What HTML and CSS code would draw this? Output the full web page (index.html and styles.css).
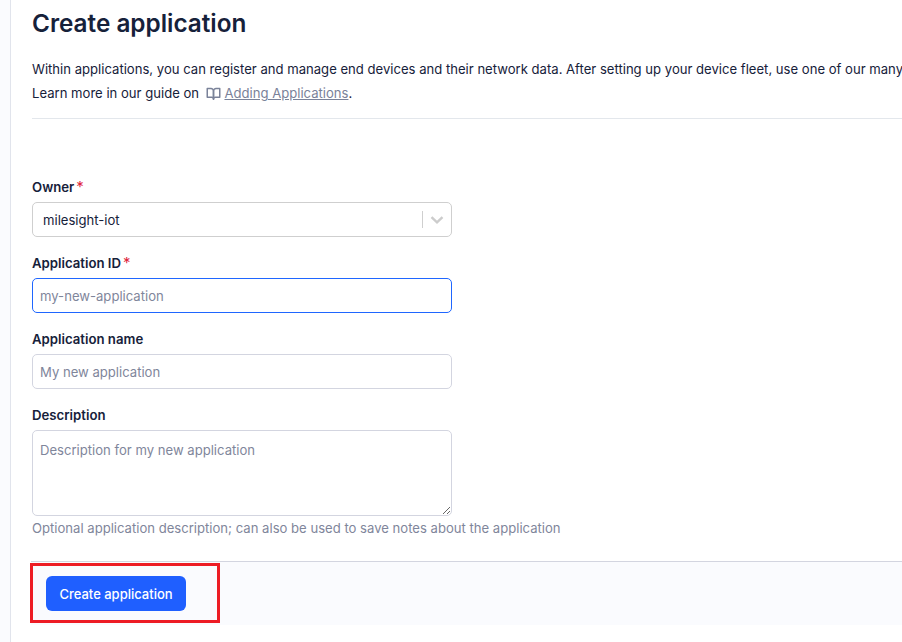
FILE: index.html
```html
<!DOCTYPE html>
<html lang="en">
<head>
    <meta charset="UTF-8">
    <meta name="viewport" content="width=device-width, initial-scale=1.0">
    <title>Create application</title>
    <link rel="stylesheet" href="styles.css">
</head>
<body>
    <div class="sidebar"></div>

    <main class="content">
        <h1 class="title">Create application</h1>
        <p class="intro">Within applications, you can register and manage end devices and their network data. After setting up your device fleet, use one of our many</p>
        <p class="intro">Learn more in our guide on
            <a class="guide-link" href="#"><svg class="book-icon" viewBox="0 0 24 24" width="15" height="15" fill="none" stroke="currentColor" stroke-width="2.4" stroke-linecap="round" stroke-linejoin="round"><path d="M2 4h6a4 4 0 0 1 4 4v13a3 3 0 0 0-3-3H2z"/><path d="M22 4h-6a4 4 0 0 0-4 4v13a3 3 0 0 1 3-3h7z"/></svg> <span class="guide-text">Adding Applications</span></a>.</p>
        <hr class="divider">

        <form class="app-form">
            <div class="form-group">
                <label class="field-label">Owner<span class="required">*</span></label>
                <div class="select-box">
                    <span class="select-value">milesight-iot</span>
                    <span class="select-sep"></span>
                    <svg class="select-arrow" viewBox="0 0 20 20" width="20" height="20"><path d="M4.5 7.2 10 12.4l5.5-5.2" fill="none" stroke="#ccc" stroke-width="2.4"/></svg>
                </div>
            </div>
            <div class="form-group">
                <label class="field-label" for="appId">Application ID<span class="required">*</span></label>
                <input class="text-input is-focused" type="text" id="appId" placeholder="my-new-application">
            </div>
            <div class="form-group">
                <label class="field-label" for="appName">Application name</label>
                <input class="text-input" type="text" id="appName" placeholder="My new application">
            </div>
            <div class="form-group">
                <label class="field-label" for="appDesc">Description</label>
                <textarea class="text-area" id="appDesc" placeholder="Description for my new application"></textarea>
                <div class="hint">Optional application description; can also be used to save notes about the application</div>
            </div>

            <div class="submit-bar">
                <button class="submit-btn" type="button">Create application</button>
                <div class="highlight-box"></div>
            </div>
        </form>
    </main>
</body>
</html>
```

FILE: styles.css
```css
* {
    box-sizing: border-box;
}
html, body {
    height: 642px;
    overflow: hidden;
}
body {
    margin: 0;
    display: flex;
    font-family: Inter, "Noto Sans", sans-serif;
    color: #16213a;
    background: #fff;
}
.sidebar {
    width: 11px;
    flex: none;
    background: #fafbfe;
    border-right: 1px solid #e1e4ec;
}
.content {
    flex: 1;
    min-width: 0;
    padding-left: 21px;
    overflow: hidden;
}
.title {
    margin: 5px 0 0;
    font-size: 24.3px;
    line-height: 36px;
    font-weight: 600;
}
.intro {
    margin: 0;
    font-size: 13.1px;
    line-height: 24px;
    white-space: nowrap;
}
.title + .intro {
    margin-top: 16px;
}
.guide-link {
    color: #7a8299;
    text-decoration: none;
}
.guide-text {
    text-decoration: underline;
}
.book-icon {
    margin-left: 3px;
    vertical-align: -3px;
}
.divider {
    margin: 13px 0 0;
    border: 0;
    border-top: 1px solid #e3e7ec;
}
.app-form {
    margin-top: 59px;
}
.form-group {
    width: 420px;
    margin-bottom: 17px;
}
.field-label {
    display: block;
    height: 24px;
    font-size: 13.2px;
    line-height: 18px;
    font-weight: 600;
}
.required {
    margin-left: 2px;
    font-size: 15px;
    line-height: 0;
    color: #e0263c;
    font-weight: 400;
}
.select-box {
    display: flex;
    align-items: center;
    height: 35px;
    padding-left: 10px;
    border: 1px solid #cfcfcf;
    border-radius: 5px;
    font-size: 13.1px;
}
.select-value {
    flex: 1;
}
.select-sep {
    width: 1px;
    height: 17px;
    background: #cfcfcf;
}
.select-arrow {
    margin: 0 4px 0 4px;
}
.text-input, .text-area {
    display: block;
    width: 100%;
    padding: 0 7px;
    border: 1px solid #d3d5e0;
    border-radius: 5px;
    outline: none;
    font-family: inherit;
    font-size: 13.1px;
    color: #16213a;
}
.text-input {
    height: 35px;
}
.text-area {
    height: 86px;
    padding-top: 10px;
    line-height: 18px;
}
.text-input::placeholder, .text-area::placeholder {
    color: #7f869b;
    opacity: 1;
}
.is-focused {
    border-color: #1f66ff;
}
.hint {
    margin-top: 3px;
    font-size: 13.1px;
    line-height: 18px;
    white-space: nowrap;
    color: #7f869b;
}
.submit-bar {
    position: relative;
    margin: 24px 0 0 -1px;
    padding: 14px 15px;
    height: 64px;
    background: #fafbfe;
    border-top: 1px solid #d3d5e0;
}
.submit-btn {
    display: block;
    width: 140px;
    height: 35px;
    padding: 0;
    border: 0;
    border-radius: 6px;
    background: #1f5fff;
    color: #fff;
    font-family: inherit;
    font-size: 13px;
    font-weight: 500;
}
/* red annotation drawn over the screenshot */
.highlight-box {
    position: absolute;
    left: -1px;
    top: 1px;
    width: 190px;
    height: 60px;
    border: 3px solid #ed1c24;
}
```
